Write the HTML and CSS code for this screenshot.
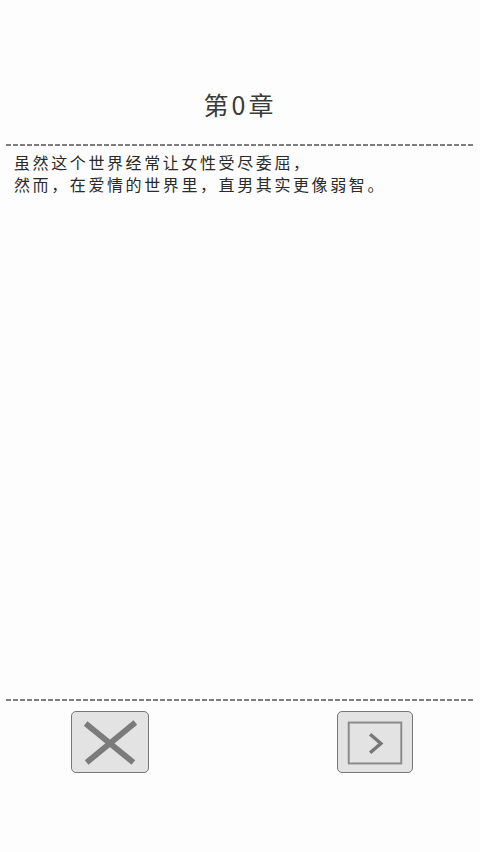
FILE: index.html
```html
<!DOCTYPE html>
<html lang="zh-CN">
<head>
<meta charset="UTF-8">
<meta name="viewport" content="width=device-width, initial-scale=1.0">
<title>第0章</title>
<link rel="stylesheet" href="styles.css">
</head>
<body>
<div class="page">
    <h1 class="chapter-title">第0章</h1>
    <div class="rule"></div>
    <div class="story">
        <p>虽然这个世界经常让女性受尽委屈，</p>
        <p>然而，在爱情的世界里，直男其实更像弱智。</p>
    </div>
    <div class="rule"></div>
    <div class="button-row">
        <button class="button" onclick="closeStory()">
            <svg width="78" height="62" viewBox="0 0 78 62">
                <path d="M14 11 L63 51 M65 10 L15 51" stroke="#7b7b7b" stroke-width="6" fill="none"/>
            </svg>
        </button>
        <button class="button" onclick="nextChapter()">
            <svg width="76" height="62" viewBox="0 0 76 62">
                <rect x="11" y="10" width="54" height="42" fill="none" stroke="#8a8a8a" stroke-width="2"/>
                <path d="M33 22 L44 31.5 L33 41" stroke="#777" stroke-width="3.5" fill="none"/>
            </svg>
        </button>
    </div>
</div>

<script>
    function closeStory() {
        document.querySelector('.story').innerHTML = '';
    }

    function nextChapter() {
        const title = document.querySelector('.chapter-title');
        const n = parseInt(title.textContent.replace(/\D/g, ''), 10) + 1;
        title.textContent = '第' + n + '章';
    }
</script>
</body>
</html>
```

FILE: styles.css
```css
body {
    margin: 0;
    background-color: #fdfdfd;
    color: #2a2a2a;
    font-family: "Noto Sans CJK SC", "Noto Sans", sans-serif;
}
.page {
    display: flex;
    flex-direction: column;
    height: 100vh;
}
.chapter-title {
    margin: 0;
    padding-top: 89px;
    line-height: 30px;
    font-size: 25px;
    font-weight: normal;
    letter-spacing: 3px;
    text-align: center;
    color: #3a3a3a;
}
.rule {
    height: 2px;
    margin: 0 6px;
    background: repeating-linear-gradient(to right, #7d7d7d 0 5px, transparent 5px 7px);
}
.chapter-title + .rule {
    margin-top: 25px;
}
.story {
    flex: 1;
    padding: 5px 14px 0;
    font-size: 16px;
    letter-spacing: 2.6px;
}
.story p {
    margin: 0;
    line-height: 22px;
}
.button-row {
    display: flex;
    justify-content: space-between;
    padding: 10px 67px 79px 71px;
}
.button {
    display: flex;
    padding: 0;
    border: 1.5px solid #777;
    border-radius: 5px;
    background-color: #e3e3e3;
    cursor: pointer;
}
.button:first-child {
    width: 78px;
    height: 62px;
}
.button:last-child {
    width: 76px;
    height: 62px;
}
```
